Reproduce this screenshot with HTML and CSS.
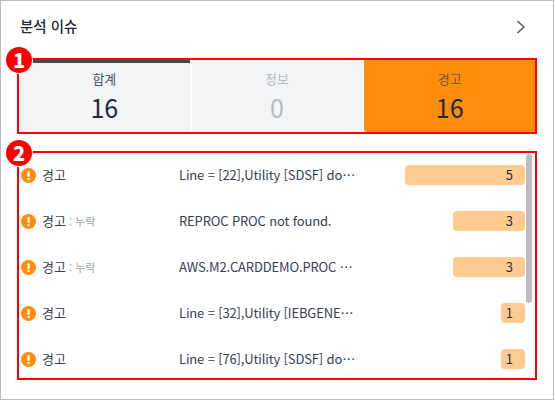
FILE: index.html
```html
<!doctype html>
<html lang="ko">
<head>
<meta charset="utf-8">
<title>분석 이슈</title>
<link rel="stylesheet" href="styles.css">
</head>
<body>
<div class="card">
	<div class="head">
		<h2 class="title">분석 이슈</h2>
		<svg class="chev" width="10" height="14" viewBox="0 0 10 14"><path d="M1.5 1 L8 7 L1.5 13" fill="none" stroke="#4b5563" stroke-width="1.4"/></svg>
	</div>

	<div class="mark-box tabs">
		<span class="mark">1</span>
		<div class="tab tab-total"><span class="tab-name">합계</span><span class="tab-num">16</span></div>
		<div class="tab tab-info"><span class="tab-name">정보</span><span class="tab-num">0</span></div>
		<div class="tab tab-warn"><span class="tab-name">경고</span><span class="tab-num">16</span></div>
	</div>

	<div class="mark-box list">
		<span class="mark">2</span>
		<div class="thumb"></div>

		<div class="row">
			<svg class="ico" width="15" height="15" viewBox="0 0 15 15"><circle cx="7.5" cy="7.5" r="7.5" fill="#ff8c0c"/><rect x="6.2" y="3" width="2.6" height="6" rx="1.2" fill="#fff2e0"/><circle cx="7.5" cy="11" r="1.3" fill="#fff2e0"/></svg>
			<span class="kind">경고</span>
			<span class="msg">Line = [22],Utility [SDSF] does not exist</span>
			<span class="bar-wrap"><span class="bar" style="width:120px">5</span></span>
		</div>
		<div class="row">
			<svg class="ico" width="15" height="15" viewBox="0 0 15 15"><circle cx="7.5" cy="7.5" r="7.5" fill="#ff8c0c"/><rect x="6.2" y="3" width="2.6" height="6" rx="1.2" fill="#fff2e0"/><circle cx="7.5" cy="11" r="1.3" fill="#fff2e0"/></svg>
			<span class="kind">경고<em>: 누락</em></span>
			<span class="msg">REPROC PROC not found.</span>
			<span class="bar-wrap"><span class="bar" style="width:72px">3</span></span>
		</div>
		<div class="row">
			<svg class="ico" width="15" height="15" viewBox="0 0 15 15"><circle cx="7.5" cy="7.5" r="7.5" fill="#ff8c0c"/><rect x="6.2" y="3" width="2.6" height="6" rx="1.2" fill="#fff2e0"/><circle cx="7.5" cy="11" r="1.3" fill="#fff2e0"/></svg>
			<span class="kind">경고<em>: 누락</em></span>
			<span class="msg">AWS.M2.CARDDEMO.PROC PROC not found.</span>
			<span class="bar-wrap"><span class="bar" style="width:72px">3</span></span>
		</div>
		<div class="row">
			<svg class="ico" width="15" height="15" viewBox="0 0 15 15"><circle cx="7.5" cy="7.5" r="7.5" fill="#ff8c0c"/><rect x="6.2" y="3" width="2.6" height="6" rx="1.2" fill="#fff2e0"/><circle cx="7.5" cy="11" r="1.3" fill="#fff2e0"/></svg>
			<span class="kind">경고</span>
			<span class="msg">Line = [32],Utility [IEBGENER] does not exist</span>
			<span class="bar-wrap"><span class="bar" style="width:24px">1</span></span>
		</div>
		<div class="row">
			<svg class="ico" width="15" height="15" viewBox="0 0 15 15"><circle cx="7.5" cy="7.5" r="7.5" fill="#ff8c0c"/><rect x="6.2" y="3" width="2.6" height="6" rx="1.2" fill="#fff2e0"/><circle cx="7.5" cy="11" r="1.3" fill="#fff2e0"/></svg>
			<span class="kind">경고</span>
			<span class="msg">Line = [76],Utility [SDSF] does not exist</span>
			<span class="bar-wrap"><span class="bar" style="width:24px">1</span></span>
		</div>
	</div>
</div>
</body>
</html>
```

FILE: styles.css
```css
body { font-family: "Noto Sans CJK KR", "Noto Sans", sans-serif; margin: 0; color: #1f2937; }

.card { border: 1px solid #bdbdbd; box-sizing: border-box; height: 400px; overflow: hidden; padding: 0 16px; width: 554px; }

.head { align-items: center; box-sizing: border-box; display: flex; height: 57px; justify-content: space-between; padding: 0 11px 6px 3px; }
.title { font-size: 14.5px; font-weight: 500; margin: -3px 0 0; }

.mark-box { border: 2px solid #f00; box-sizing: border-box; position: relative; width: 520px; }
.mark { background: #f00; border-radius: 50%; box-shadow: 0 0 0 1px #fff; color: #fff; font: 900 20px/25px "Noto Sans CJK KR", sans-serif; height: 26px; left: -13px; position: absolute; text-align: center; top: -13px; width: 26px; z-index: 2; }

.tabs { display: flex; gap: 2px; height: 76px; }
.tab { align-items: center; background: #f3f4f6; box-sizing: border-box; display: flex; flex: 1; flex-direction: column; padding-top: 9px; }
.tab-total { border-top: 3px solid #414a5c; padding-top: 6px; }
.tab-info { color: #b3bac4; }
.tab-warn { background: #ff8c0c; border-radius: 0 0 0 3px; }
.tab-name { color: #4b5563; font-size: 13px; line-height: 20px; }
.tab-info .tab-name { color: #b3bac4; }
.tab-warn .tab-name { color: #6b5a45; }
.tab-num { font-size: 25px; line-height: 36px; }

.list { display: flex; flex-direction: column; gap: 26px; height: 229px; margin-top: 17px; padding-top: 12px; }
.thumb { background: #bdbdbd; border-radius: 3px; height: 149px; position: absolute; right: 3px; top: 1px; width: 6px; }

.row { align-items: center; display: flex; flex: none; height: 20px; padding-right: 10px; }
.ico { flex: none; margin-left: 2px; }
.kind { color: #374151; flex: none; font-size: 13px; margin-left: 6px; margin-top: -2px; width: 137px; }
.kind em { color: #9ca3af; font-size: 11px; font-style: normal; margin-left: 3px; }
.msg { color: #374151; font-size: 13px; letter-spacing: -0.15px; margin-top: -2px; overflow: hidden; text-overflow: ellipsis; white-space: nowrap; width: 178px; }
.bar-wrap { display: flex; flex: 1; justify-content: flex-end; }
.bar { background: #ffcb91; border-radius: 4px; box-sizing: border-box; font-size: 13px; height: 20px; line-height: 20px; padding-right: 12px; text-align: right; }
```
